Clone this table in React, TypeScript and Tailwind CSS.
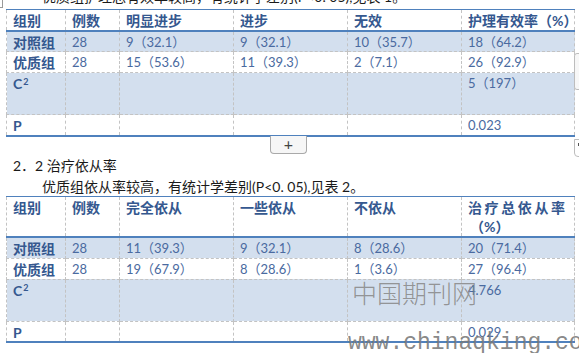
import React from 'react';

type Row = { label: React.ReactNode; cells: string[]; tall?: boolean; shaded?: boolean };

const FONT = { fontFamily: 'Lato, "Noto Sans CJK SC", sans-serif' };

const Csq = () => (
  <>
    C<sup className="text-[9px] ml-[1px]">2</sup>
  </>
);

const table1Head = ['组别', '例数', '明显进步', '进步', '无效', '护理有效率（%）'];
const table1Rows: Row[] = [
  { label: '对照组', cells: ['28', '9（32.1）', '9（32.1）', '10（35.7）', '18（64.2）'], shaded: true },
  { label: '优质组', cells: ['28', '15（53.6）', '11（39.3）', '2（7.1）', '26（92.9）'] },
  { label: <Csq />, cells: ['', '', '', '', '5（197）'], tall: true, shaded: true },
  { label: 'P', cells: ['', '', '', '', '0.023'] },
];

const table2Rows: Row[] = [
  { label: '对照组', cells: ['28', '11（39.3）', '9（32.1）', '8（28.6）', '20（71.4）'], shaded: true },
  { label: '优质组', cells: ['28', '19（67.9）', '8（28.6）', '1（3.6）', '27（96.4）'] },
  { label: <Csq />, cells: ['', '', '', '', '4.766'], tall: true, shaded: true },
  { label: 'P', cells: ['', '', '', '', '0.029'] },
];

const Cols = () => (
  <colgroup>
    <col className="w-[59px]" />
    <col className="w-[54px]" />
    <col className="w-[114px]" />
    <col className="w-[114px]" />
    <col className="w-[114px]" />
    <col className="w-[113px]" />
  </colgroup>
);

const cellBase = 'border border-dashed border-[#c3c3c3] align-top pl-[6px] pt-[2px] leading-[17px]';
const headCell = `${cellBase} border-t-[#4f81bd] border-b-2 border-b-[#4f81bd] text-[14px] font-bold text-[#35588f] [border-top-style:solid] [border-bottom-style:solid]`;

const DataRows: React.FC<{ rows: Row[] }> = ({ rows }) => (
  <>
    {rows.map((r, i) => (
      <tr key={i} className={`${r.tall ? 'h-[42px]' : 'h-[21px]'} ${r.shaded ? 'bg-[#d3dfee]' : 'bg-white'}`}>
        <td className={`${cellBase} text-[14px] font-bold text-[#35588f]`}>{r.label}</td>
        {r.cells.map((c, j) => (
          <td key={j} className={`${cellBase} text-[13px] text-[#4a6aa0]`}>
            {c}
          </td>
        ))}
      </tr>
    ))}
  </>
);

const BottomRule = () => (
  <tr className="h-0">
    <td colSpan={6} className="p-0 border-t-2 border-t-[#4f81bd] [border-top-style:solid]" />
  </tr>
);

const Table1 = () => (
  <table className="table-fixed border-collapse w-[568px]">
    <Cols />
    <tbody>
      <tr className="h-[21px] bg-white">
        {table1Head.map((h, i) => (
          <td key={i} className={headCell}>
            {h}
          </td>
        ))}
      </tr>
      <DataRows rows={table1Rows} />
      <BottomRule />
    </tbody>
  </table>
);

const Table2 = () => {
  const head = ['组别', '例数', '完全依从', '一些依从', '不依从'];
  return (
    <table className="table-fixed border-collapse w-[568px]">
      <Cols />
      <tbody>
        <tr className="h-[41px] bg-white">
          {head.map((h, i) => (
            <td key={i} className={headCell}>
              {h}
            </td>
          ))}
          <td className={`${headCell} !leading-[19px] !pt-[1px]`}>
            <span className="tracking-[2.6px]">治疗总依从率</span>
            <br />
            <span className="pl-[2px]">（%）</span>
          </td>
        </tr>
        <DataRows rows={table2Rows} />
        <BottomRule />
      </tbody>
    </table>
  );
};

export default function App() {
  return (
    <div className="relative w-[579px] h-[353px] overflow-hidden bg-white text-[#1a1a1a]" style={FONT}>
      {/* sentence cut off by the top of the view */}
      <div className="h-[9px] overflow-hidden pl-[42px]">
        <p className="-mt-[13px] text-[14px] leading-[19px] whitespace-nowrap">
          优质组护理总有效率较高，有统计学差别(P&lt;0. 05),见表 1。
        </p>
      </div>

      <div className="pl-[6px]">
        <Table1 />
      </div>

      <div className="flex justify-center pr-[2px]">
        <button
          type="button"
          className="w-[37px] h-[18px] -mt-[1px] flex items-center justify-center rounded-b-[4px] border border-t-0 border-[#a9a9a9] bg-[#f6f6f6] text-[#444] text-[16px] leading-none"
        >
          +
        </button>
      </div>

      <p className="mt-[3px] pl-[13px] text-[14px] leading-[18px] whitespace-nowrap">2．2 治疗依从率</p>
      <p className="mt-[3px] pl-[42px] text-[14px] leading-[18px] whitespace-nowrap">
        优质组依从率较高，有统计学差别(P&lt;0. 05),见表 2。
      </p>

      <div className="pl-[6px]">
        <Table2 />
      </div>

      {/* editor widgets at the edges */}
      <div className="absolute left-0 top-0 w-[3px] h-[8px] border-r border-b border-[#9a9a9a]" />
      <div className="absolute left-[574px] top-[53px] w-[10px] h-[37px] border border-[#bdbdbd] rounded-l-[3px] bg-[#f7f7f7]" />
      <div className="absolute left-[574px] top-[139px] w-[10px] h-[18px] border border-[#bdbdbd] rounded-bl-[4px] bg-white">
        <div className="ml-[3px] mt-[3px] w-[3px] h-[3px] border-l border-t border-[#555]" />
      </div>

      {/* watermark */}
      <div
        className="absolute left-[352px] top-[276px] text-[25px] leading-[32px] text-[#8a8a8a]/90 font-light pointer-events-none"
        style={{ fontFamily: '"Noto Sans CJK SC", sans-serif' }}
      >
        中国期刊网
      </div>
      <div
        className="absolute left-[348px] top-[329px] text-[23px] leading-[28px] text-[#7a7a7a]/90 whitespace-nowrap pointer-events-none"
        style={{ fontFamily: '"Liberation Mono", monospace' }}
      >
        www.chinaqking.com
      </div>
    </div>
  );
}
